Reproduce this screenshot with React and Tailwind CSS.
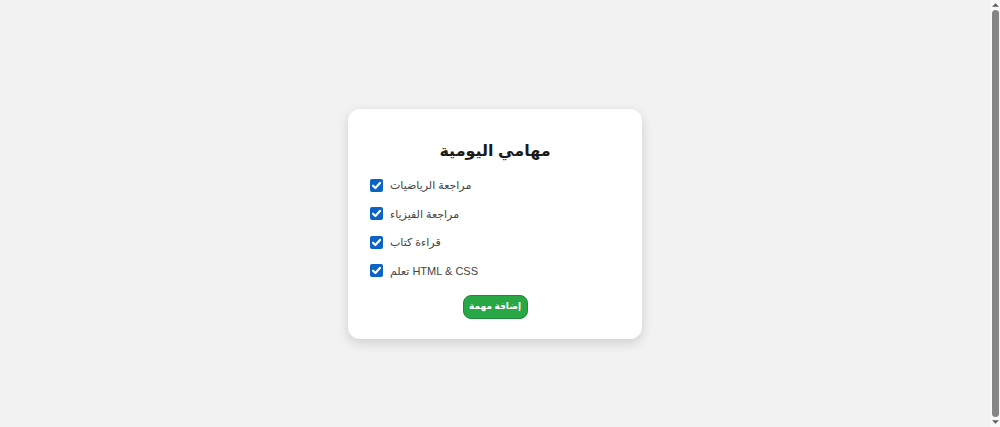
import React, { useState } from "react";

const initialTasks = [
  { id: 1, label: "مراجعة الرياضيات", done: true },
  { id: 2, label: "مراجعة الفيزياء", done: true },
  { id: 3, label: "قراءة كتاب", done: true },
  { id: 4, label: "تعلم HTML & CSS", done: true },
];

const CheckBox = ({ checked, onChange }) => (
  <button
    type="button"
    onClick={onChange}
    className={`flex h-[13px] w-[13px] shrink-0 items-center justify-center rounded-[2px] ${
      checked ? "bg-[#0b63c4]" : "border border-[#767676] bg-white"
    }`}
  >
    {checked && (
      <svg viewBox="0 0 12 12" className="h-[11px] w-[11px]">
        <path
          d="M2.2 6.3 L4.8 8.8 L9.8 3.2"
          fill="none"
          stroke="white"
          strokeWidth="2.4"
          strokeLinecap="round"
          strokeLinejoin="round"
        />
      </svg>
    )}
  </button>
);

// fake page scrollbar, the reference shows one
const ScrollBar = () => (
  <div className="flex w-[10px] shrink-0 flex-col items-center bg-[#f8f8f8]">
    <svg viewBox="0 0 8 4" className="mt-[3px] h-[4px] w-[7px]">
      <path d="M0 4 L4 0 L8 4 Z" fill="#606060" />
    </svg>
    <div className="mt-[3px] w-[7px] flex-1 rounded-full bg-[#858585]" />
    <svg viewBox="0 0 8 4" className="mb-[3px] mt-[3px] h-[4px] w-[7px]">
      <path d="M0 0 L4 4 L8 0 Z" fill="#606060" />
    </svg>
  </div>
);

const App = () => {
  const [tasks, setTasks] = useState(initialTasks);

  const toggle = (id) =>
    setTasks((prev) =>
      prev.map((t) => (t.id === id ? { ...t, done: !t.done } : t))
    );

  return (
    <div className="flex h-screen bg-[#f2f2f2] font-['Liberation_Sans','DejaVu_Sans',sans-serif]">
      <div className="flex flex-1 items-center justify-center pt-[21px]">
        <div className="w-[294px] rounded-[12px] bg-white px-[22px] pb-[20px] pt-[30px] shadow-[0_4px_12px_rgba(0,0,0,0.15)]">
          <h2 className="h-[24px] text-center text-[16px] font-bold leading-[24px] text-[#1a1a1a]">
            مهامي اليومية
          </h2>
          <ul className="mt-[8px]">
            {tasks.map((t) => (
              <li key={t.id} className="flex h-[28.5px] items-center gap-[7px]">
                <CheckBox checked={t.done} onChange={() => toggle(t.id)} />
                <span className="text-[11px] text-[#444]">{t.label}</span>
              </li>
            ))}
          </ul>
          <div className="mt-[10px] flex justify-center">
            <button className="h-[24px] w-[65px] rounded-[8px] border border-[#1f8a38] bg-[#28a745] text-[9px] font-semibold text-white">
              إضافة مهمة
            </button>
          </div>
        </div>
      </div>
      <ScrollBar />
    </div>
  );
};

export default App;
